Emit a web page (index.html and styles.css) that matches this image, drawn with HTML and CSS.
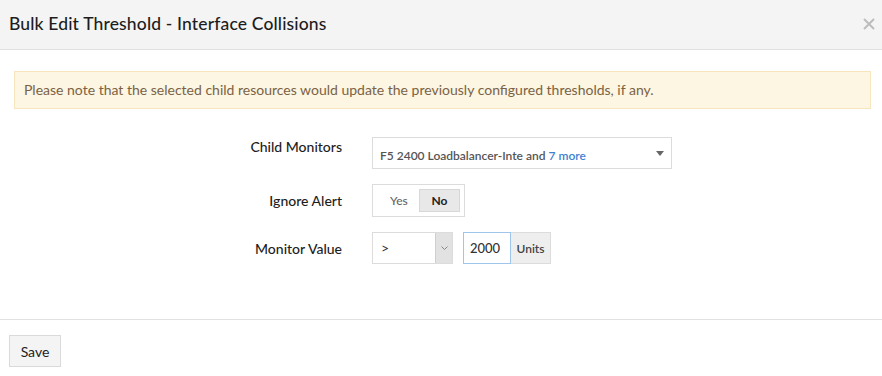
FILE: index.html
```html
<!DOCTYPE html>
<html>
<head>
<meta charset="utf-8">
<link rel="stylesheet" href="styles.css">
</head>
<body>
<div class="dialog">
  <div class="header">
    <h1 class="title">Bulk Edit Threshold - Interface Collisions</h1>
    <span class="close">
      <svg width="12" height="12" viewBox="0 0 12 12"><path d="M1 1L11 11M11 1L1 11" stroke="#bcbcbc" stroke-width="2"/></svg>
    </span>
  </div>
  <div class="body">
    <div class="alert">Please note that the selected child resources would update the previously configured thresholds, if any.</div>
    <div class="form">
      <div class="row">
        <div class="label">Child Monitors</div>
        <div class="select-box">
          <span class="sel-text">F5 2400 Loadbalancer-Inte and <span class="more">7 more</span></span>
          <svg class="caret" width="8" height="5" viewBox="0 0 8 5"><path d="M0 0H8L4 5Z" fill="#666"/></svg>
        </div>
      </div>
      <div class="row">
        <div class="label">Ignore Alert</div>
        <div class="toggle">
          <span class="opt">Yes</span>
          <span class="opt active">No</span>
        </div>
      </div>
      <div class="row">
        <div class="label">Monitor Value</div>
        <div class="controls">
          <div class="op-select">
            <span class="op-text">&gt;</span>
            <span class="op-arrow"><svg width="7" height="4" viewBox="0 0 7 4"><path d="M0.5 0.5L3.5 3.5L6.5 0.5" stroke="#888" fill="none" stroke-width="1"/></svg></span>
          </div>
          <div class="input-group">
            <span class="value-input">2000</span>
            <span class="addon">Units</span>
          </div>
        </div>
      </div>
    </div>
  </div>
  <div class="footer">
    <button class="save">Save</button>
  </div>
</div>
</body>
</html>
```
FILE: styles.css
```css
* { box-sizing: border-box; }
html, body { margin: 0; padding: 0; background: #fff; }
body { font-family: Lato, "Open Sans", sans-serif; color: #222; }
.dialog { width: 882px; height: 376px; display: flex; flex-direction: column; }
.header {
  height: 50px;
  background: #f4f4f4;
  border-bottom: 1px solid #e2e2e2;
  display: flex;
  align-items: center;
  justify-content: space-between;
  padding: 0 7px 0 9px;
}
.title { margin: 0; font-size: 17.5px; font-weight: 500; color: #1d1d1d; letter-spacing: 0.15px; padding-bottom: 2px; }
.close { display: flex; padding-bottom: 2px; }
.body { padding: 21px 11px 0 14px; height: 269px; }
.alert {
  height: 38px;
  background: #fcf6e3;
  border: 1px solid #f7e6bd;
  color: #7b6243;
  font-size: 14px;
  display: flex;
  align-items: center;
  padding: 0 0 2px 9px;
}
.form { padding-top: 28px; display: flex; flex-direction: column; gap: 15px; }
.row { display: flex; align-items: center; }
.label { width: 328px; text-align: right; font-size: 14px; font-weight: 500; color: #1d1d1d; margin-right: 30px; }
.row:first-child .label { align-self: flex-start; padding-top: 1px; }
.select-box {
  width: 300px; height: 32px;
  border: 1px solid #dcdcdc;
  display: flex; align-items: center; justify-content: space-between;
  padding: 4px 7px 0 7px;
  font-size: 12px; font-weight: 600; color: #555;
}
.more { color: #3d82d2; }
.caret { margin-bottom: 3px; }
.toggle {
  width: 93px; height: 33px;
  border: 1px solid #dcdcdc;
  display: flex; align-items: center; padding: 4px 4px 4px 17px;
  font-size: 12px;
}
.opt { color: #666; font-weight: 500; }
.opt.active {
  margin-left: auto;
  width: 41px; height: 23px;
  background: #e8e8e8; border: 1px solid #d8d8d8;
  color: #222; font-weight: 700;
  display: flex; align-items: center; justify-content: center;
}
.controls { display: flex; align-items: center; gap: 10px; }
.op-select {
  width: 81px; height: 32px;
  border: 1px solid #dcdcdc;
  display: flex; align-items: stretch;
}
.op-text { flex: 1; padding: 6px 0 0 8px; font-size: 14px; color: #333; }
.op-arrow {
  width: 17px; background: #e2e2e2; border-left: 1px solid #cfcfcf;
  display: flex; align-items: center; justify-content: center;
}
.input-group { display: flex; height: 32px; }
.value-input {
  width: 48px; border: 1px solid #9ec5ec;
  display: flex; align-items: center; padding-left: 6px;
  font-size: 13px; font-weight: 500; color: #333;
}
.addon {
  width: 40px; background: #eee; border: 1px solid #dcdcdc; border-left: none;
  display: flex; align-items: center; justify-content: center;
  font-size: 12px; font-weight: 600; color: #444;
}
.footer { border-top: 1px solid #e2e2e2; padding: 15px 0 0 9px; }
.save {
  width: 52px; height: 32px;
  background: #f4f4f4; border: 1px solid #dadada;
  font-family: Lato, sans-serif; font-size: 14px; color: #222;
  padding: 0;
}
```
